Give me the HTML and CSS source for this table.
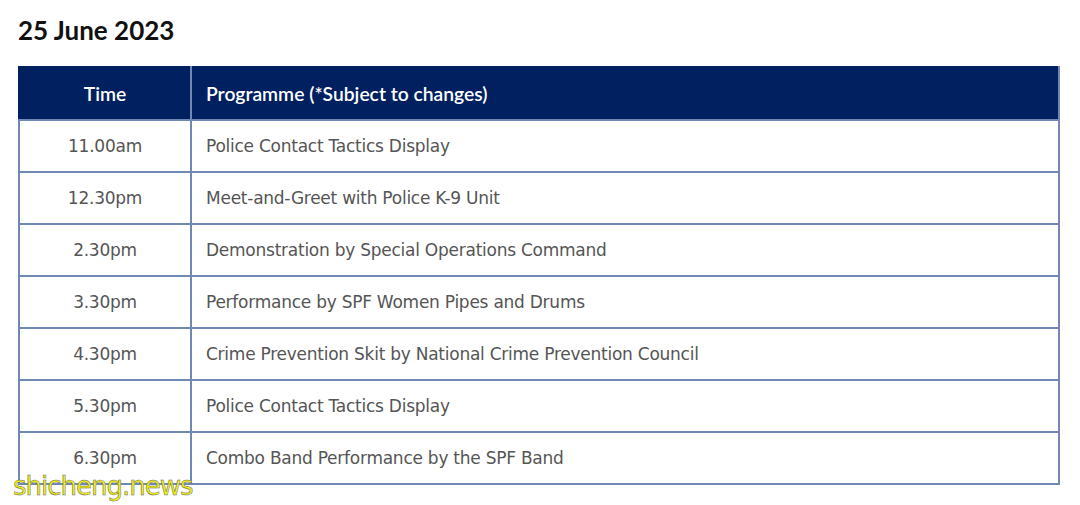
FILE: index.html
```html
<!DOCTYPE html>
<html>
<head>
<meta charset="utf-8">
<link rel="stylesheet" href="styles.css">
</head>
<body>
<div class="page">
  <h2 class="title">25 June 2023</h2>
  <table class="sched">
    <thead>
      <tr><th class="c-time">Time</th><th class="c-prog">Programme (*Subject to changes)</th></tr>
    </thead>
    <tbody>
      <tr><td class="c-time">11.00am</td><td class="c-prog">Police Contact Tactics Display</td></tr>
      <tr><td class="c-time">12.30pm</td><td class="c-prog">Meet-and-Greet with Police K-9 Unit</td></tr>
      <tr><td class="c-time">2.30pm</td><td class="c-prog">Demonstration by Special Operations Command</td></tr>
      <tr><td class="c-time">3.30pm</td><td class="c-prog">Performance by SPF Women Pipes and Drums</td></tr>
      <tr><td class="c-time">4.30pm</td><td class="c-prog">Crime Prevention Skit by National Crime Prevention Council</td></tr>
      <tr><td class="c-time">5.30pm</td><td class="c-prog">Police Contact Tactics Display</td></tr>
      <tr><td class="c-time">6.30pm</td><td class="c-prog">Combo Band Performance by the SPF Band</td></tr>
    </tbody>
  </table>
  <div class="watermark">shicheng.news</div>
</div>
</body>
</html>
```
FILE: styles.css
```css
html, body {
  margin: 0;
  padding: 0;
  background: #fff;
}
.page {
  position: relative;
  padding: 14px 20px 0 18px;
  width: 1080px;
  height: 505px;
  box-sizing: border-box;
}
.title {
  margin: 0 0 20px 0;
  font-family: Lato, "Liberation Sans", sans-serif;
  font-weight: 700;
  font-size: 26px;
  line-height: 32px;
  color: #111;
}
.sched {
  width: 1042px;
  border-collapse: collapse;
  table-layout: fixed;
}
.sched th, .sched td {
  border: 2px solid #6f89b4;
  height: 50px;
  padding: 0;
}
.sched thead th {
  background: #002060;
  color: #fff;
  font-family: Lato, "Liberation Sans", sans-serif;
  font-weight: 600;
  font-size: 19.3px;
  height: 51px;
  border-color: #002060 #6f89b4 #6f89b4 #002060;
}
.sched .c-time {
  width: 170px;
  text-align: center;
}
.sched th.c-prog, .sched td.c-prog {
  text-align: left;
  padding-left: 14px;
}
.sched td {
  font-family: "DejaVu Sans", Tahoma, sans-serif;
  font-size: 17px;
  color: #555;
  letter-spacing: -0.25px;
}
.watermark {
  position: absolute;
  left: 13px;
  top: 471px;
  font-family: "DejaVu Sans", sans-serif;
  font-size: 26px;
  color: #eeee10;
  letter-spacing: -1px;
  -webkit-text-stroke: 0.5px #666;
}
```
